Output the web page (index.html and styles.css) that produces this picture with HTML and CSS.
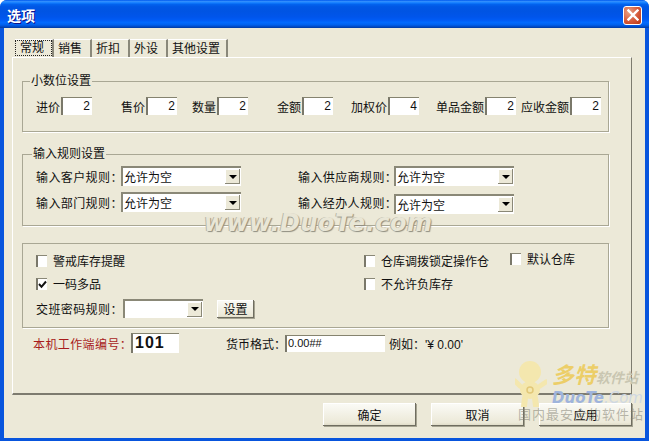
FILE: index.html
```html
<!DOCTYPE html>
<html lang="zh-CN">
<head>
    <meta charset="UTF-8">
    <meta name="viewport" content="width=device-width, initial-scale=1.0">
    <title>选项</title>
    <link rel="stylesheet" href="styles.css">
</head>
<body>
    <div class="window">
        <div class="titlebar">
            <span class="title">选项</span>
            <button class="close-btn" aria-label="关闭">
                <svg width="12" height="12" viewBox="0 0 12 12"><path d="M1.5 1.5 L10.5 10.5 M10.5 1.5 L1.5 10.5" stroke="#fff" stroke-width="2.4" stroke-linecap="square" fill="none"/></svg>
            </button>
        </div>

        <div class="client">
            <div class="tabs">
                <div class="tab active"><span>常规</span></div>
                <div class="tab"><span>销售</span></div>
                <div class="tab"><span>折扣</span></div>
                <div class="tab"><span>外设</span></div>
                <div class="tab"><span>其他设置</span></div>
            </div>

            <div class="pane">
                <!-- 小数位设置 -->
                <fieldset class="group group-decimal">
                    <legend>小数位设置</legend>
                    <div class="decimal-row">
                        <label class="dec dec-1">进价<span class="field">2</span></label>
                        <label class="dec dec-2">售价<span class="field">2</span></label>
                        <label class="dec dec-3">数量<span class="field">2</span></label>
                        <label class="dec dec-4">金额<span class="field">2</span></label>
                        <label class="dec dec-5">加权价<span class="field">4</span></label>
                        <label class="dec dec-6">单品金额<span class="field">2</span></label>
                        <label class="dec dec-7">应收金额<span class="field">2</span></label>
                    </div>
                </fieldset>

                <!-- 输入规则设置 -->
                <fieldset class="group group-rules">
                    <legend>输入规则设置</legend>
                    <div class="rules-grid">
                        <div class="rule">
                            <span class="rule-label">输入客户规则：</span>
                            <div class="combo"><span>允许为空</span><i class="arrow"></i></div>
                        </div>
                        <div class="rule">
                            <span class="rule-label">输入供应商规则：</span>
                            <div class="combo"><span>允许为空</span><i class="arrow"></i></div>
                        </div>
                        <div class="rule">
                            <span class="rule-label">输入部门规则：</span>
                            <div class="combo"><span>允许为空</span><i class="arrow"></i></div>
                        </div>
                        <div class="rule rule-low">
                            <span class="rule-label">输入经办人规则：</span>
                            <div class="combo"><span>允许为空</span><i class="arrow"></i></div>
                        </div>
                    </div>
                </fieldset>

                <!-- 其他选项 -->
                <div class="group group-misc">
                    <div class="misc-left">
                        <div class="check-row"><span class="check"></span>警戒库存提醒</div>
                        <div class="check-row row-two">
                            <span class="check">
                                <svg width="9" height="9" viewBox="0 0 9 9"><path d="M1 4 L3.5 6.8 L8 1.5" stroke="#111" stroke-width="2" fill="none"/></svg>
                            </span>一码多品
                        </div>
                        <div class="shift-row">
                            <span class="shift-label">交班密码规则：</span>
                            <div class="combo combo-short"><span></span><i class="arrow"></i></div>
                            <button class="btn btn-small">设置</button>
                        </div>
                    </div>
                    <div class="misc-right">
                        <div class="check-row"><span class="check"></span>仓库调拨锁定操作仓</div>
                        <div class="check-row row-two"><span class="check"></span>不允许负库存</div>
                    </div>
                    <div class="check-row misc-far"><span class="check"></span>默认仓库</div>
                </div>

                <div class="footer-row">
                    <span class="station-label">本机工作端编号：</span>
                    <span class="field station-field">101</span>
                    <span class="money-label">货币格式：</span>
                    <span class="field money-field">0.00##</span>
                    <span class="money-example">例如：'¥ 0.00'</span>
                </div>
            </div>

            <div class="actions">
                <button class="btn">确定</button>
                <button class="btn">取消</button>
                <button class="btn">应用</button>
            </div>
        </div>

        <!-- watermarks sit over the dialog -->
        <div class="mark-center">www.DuoTe.com</div>
        <div class="mark-logo">
            <svg class="mascot" width="32" height="46" viewBox="0 0 32 46">
                <circle cx="15" cy="11" r="11" fill="#f4e7ae"/>
                <ellipse cx="15" cy="29" rx="10" ry="9" fill="#f4e7ae"/>
                <circle cx="15" cy="29" r="3" fill="none" stroke="#e2c878" stroke-width="1.5"/>
                <path d="M5 25 L0 20 M25 25 L31 21" stroke="#f4e7ae" stroke-width="5" stroke-linecap="round"/>
                <path d="M10 37 L9 45 M20 37 L21 45" stroke="#f4e7ae" stroke-width="6" stroke-linecap="round"/>
            </svg>
            <div class="logo-name">多特<small>软件站</small></div>
            <div class="logo-url">DuoTe<em>.Com</em></div>
            <div class="logo-slogan">国内最安全的软件站</div>
        </div>
    </div>
</body>
</html>
```

FILE: styles.css
```css
html {
    background: #fff;
}

body {
    margin: 0;
    font-family: "Liberation Sans", "Noto Sans CJK SC", sans-serif;
    font-size: 12px;
    color: #111;
}

.window {
    position: relative;
    width: 649px;
    height: 441px;
    box-sizing: border-box;
    overflow: hidden;
    display: flex;
    flex-direction: column;
    background: #0855dd;
    border-radius: 7px 7px 0 0;
}

.titlebar {
    flex: none;
    height: 28px;
    box-sizing: border-box;
    display: flex;
    align-items: center;
    justify-content: space-between;
    padding: 2px 7px 0 7px;
    background: linear-gradient(#0058ee 0, #3593ff 6%, #127dff 10%, #0262ee 16%, #0057e5 24%, #0054e3 40%, #0055eb 60%, #005bf5 72%, #026afe 80%, #0062ef 88%, #0052d6 93%, #003aa0 100%);
}

.title {
    font-size: 14px;
    font-weight: bold;
    color: #fff;
    text-shadow: 1px 1px 0 #0f1089;
}

.close-btn {
    width: 19px;
    height: 19px;
    padding: 0;
    display: flex;
    align-items: center;
    justify-content: center;
    border: 1px solid #fff;
    border-radius: 3px;
    background: radial-gradient(circle at 30% 30%, #e8a184, #d5593a 55%, #b8330f);
}

.client {
    flex: 1;
    margin: 0 4px 3px 4px;
    padding: 10px 0 0 8px;
    background: #ece9d8;
    display: flex;
    flex-direction: column;
}

/* tabs */
.tabs {
    display: flex;
    height: 19px;
    padding-left: 3px;
}

.tab {
    height: 18px;
    padding: 3px 8px 0 4px;
    box-sizing: border-box;
    margin-top: 1px;
    border-top: 1px solid #fff;
    border-right: 2px solid #8a887a;
    white-space: nowrap;
    width: 38px;
    line-height: 13px;
}

.tab:nth-child(5) {
    width: 60px;
}

.tab span {
    display: block;
}

.tab.active {
    width: 39px;
    border-right: 2px solid #8a887a;
    padding: 0;
}

.tab.active span {
    height: 16px;
    line-height: 14px;
    padding-left: 4px;
    border: 1px dotted #222;
    box-sizing: border-box;
}

.pane {
    width: 620px;
    height: 338px;
    box-sizing: border-box;
    padding: 16px 22px 0 9px;
    border-top: 1px solid #fff;
    border-left: 1px solid #fff;
    border-right: 1px solid #7d7b6f;
    border-bottom: 2px solid #7d7b6f;
}

/* group boxes */
.group {
    margin: 0;
    padding: 0;
    width: 587px;
    box-sizing: border-box;
    border: 1px solid #a9a794;
    box-shadow: 1px 1px 0 #fff;
    min-width: 0;
}

.group legend {
    margin-left: 9px;
    padding: 0 1px;
    height: 14px;
    line-height: 14px;
}

.group-decimal legend {
    margin-left: 7px;
}

.group-decimal {
    height: 58px;
}

.group-rules {
    height: 79px;
    margin-top: 15px;
}

.group-misc {
    height: 85px;
    margin-top: 17px;
    display: flex;
}

/* 小数位 row */
.decimal-row {
    display: flex;
    align-items: center;
    padding-top: 9px;
    height: 18px;
}

.dec {
    display: flex;
    align-items: center;
    justify-content: flex-end;
    white-space: nowrap;
}

.dec-1 { width: 69px; }
.dec-2 { width: 85px; }
.dec-3 { width: 71px; }
.dec-4 { width: 85px; }
.dec-5 { width: 86px; }
.dec-6 { width: 97px; }
.dec-7 { width: 85px; }

.field {
    display: block;
    height: 18px;
    box-sizing: border-box;
    background: #fff;
    border-top: 1px solid #85836f;
    border-left: 2px solid #7a786a;
    line-height: 16px;
    text-align: right;
    padding-right: 2px;
}

.dec .field {
    width: 31px;
    margin-left: 1px;
}

/* 输入规则 */
.rules-grid {
    display: grid;
    grid-template-columns: 262px 1fr;
    grid-auto-rows: 26px;
    padding: 5px 0 0 13px;
}

.rule {
    display: flex;
    align-items: center;
    height: 20px;
}

.rule-low .combo {
    margin-top: 3px;
}

.rule-label {
    white-space: nowrap;
    letter-spacing: 0.4px;
}

.rule:nth-child(even) .rule-label {
    width: 96px;
}

.rule:nth-child(odd) .rule-label {
    width: 85px;
}

.combo {
    width: 120px;
    height: 20px;
    box-sizing: border-box;
    display: flex;
    align-items: center;
    justify-content: space-between;
    background: #fff;
    border-top: 2px solid #8a8877;
    border-left: 2px solid #8a8877;
    padding: 0 1px 1px 1px;
}

.arrow {
    width: 15px;
    height: 15px;
    display: flex;
    align-items: center;
    justify-content: center;
    background: #ece9d8;
    box-shadow: inset -1px -1px 0 #8a8877, inset 1px 1px 0 #fff;
}

.arrow::after {
    content: "";
    border-left: 4px solid transparent;
    border-right: 4px solid transparent;
    border-top: 4px solid #000;
}

/* 其他选项 */
.misc-left {
    width: 341px;
    padding: 10px 0 0 13px;
    box-sizing: border-box;
}

.misc-right {
    padding-top: 10px;
    width: 146px;
}

.misc-far {
    margin-top: 8px;
    height: 13px;
}

.check-row {
    display: flex;
    align-items: center;
    height: 13px;
    white-space: nowrap;
}

.row-two {
    margin-top: 10px;
}

.check {
    flex: none;
    width: 11px;
    height: 12px;
    margin-right: 6px;
    box-sizing: border-box;
    display: flex;
    align-items: center;
    justify-content: center;
    background: #fff;
    border-top: 1px solid #8a8877;
    border-left: 2px solid #7a786a;
}

.shift-row {
    display: flex;
    align-items: center;
    margin-top: 9px;
}

.shift-label {
    width: 87px;
    white-space: nowrap;
    letter-spacing: 0.4px;
}

.combo-short {
    width: 80px;
    height: 19px;
}

/* buttons */
.btn {
    width: 93px;
    height: 23px;
    padding: 0;
    font: inherit;
    color: #111;
    border: none;
    background: linear-gradient(#fbfbf7, #ece9d8 85%, #dcd8c4);
    box-shadow: inset -1px -1px 0 #6f6d60, inset 1px 1px 0 #fff, 1px 1px 0 #a5a391;
}

.btn-small {
    width: 37px;
    height: 18px;
    margin-left: 14px;
}

.footer-row {
    display: flex;
    align-items: center;
    height: 20px;
    margin-top: 5px;
    padding-left: 11px;
    white-space: nowrap;
}

.station-label {
    width: 98px;
    color: #a81c1c;
    letter-spacing: 0.4px;
}

.station-field {
    width: 48px;
    height: 20px;
    padding: 0 0 0 2px;
    text-align: left;
    font-size: 16px;
    font-weight: bold;
    letter-spacing: 1px;
    line-height: 18px;
}

.money-label {
    width: 59px;
    margin-left: 47px;
}

.money-field {
    width: 100px;
    height: 17px;
    padding: 0 0 0 1px;
    text-align: left;
    line-height: 15px;
    font-size: 11px;
}

.money-example {
    margin-left: 4px;
}

.actions {
    display: flex;
    justify-content: flex-end;
    gap: 15px;
    margin-top: 8px;
    width: 620px;
}

/* watermarks */
.mark-center {
    position: absolute;
    left: 204px;
    top: 214px;
    line-height: 19px;
    font-family: "DejaVu Sans", sans-serif;
    font-size: 24px;
    font-weight: bold;
    font-style: italic;
    letter-spacing: 0.5px;
    color: #e9e6d6;
    text-shadow: 1px 1px 1px #8f8d80, -1px 0 0 #b9b7a8;
    pointer-events: none;
}

.mark-logo {
    position: absolute;
    left: 515px;
    top: 361px;
    width: 130px;
    height: 64px;
    pointer-events: none;
}

.mascot {
    position: absolute;
    left: 0;
    top: 0;
}

.logo-name {
    position: absolute;
    left: 37px;
    top: 2px;
    font-size: 22px;
    line-height: 26px;
    font-weight: bold;
    font-style: italic;
    color: #ecce68;
    white-space: nowrap;
}

.logo-name small {
    font-size: 14px;
    color: #c9c6b1;
}

.logo-url {
    position: absolute;
    left: 37px;
    top: 29px;
    font-family: "DejaVu Sans", sans-serif;
    font-size: 15px;
    line-height: 16px;
    font-weight: bold;
    font-style: italic;
    color: #9fb4dc;
    white-space: nowrap;
}

.logo-url em {
    font-weight: normal;
    color: #cfd8e2;
}

.logo-slogan {
    position: absolute;
    left: 3px;
    top: 46px;
    font-size: 13px;
    line-height: 16px;
    letter-spacing: 1px;
    color: rgba(130, 128, 115, 0.55);
    white-space: nowrap;
}
```
